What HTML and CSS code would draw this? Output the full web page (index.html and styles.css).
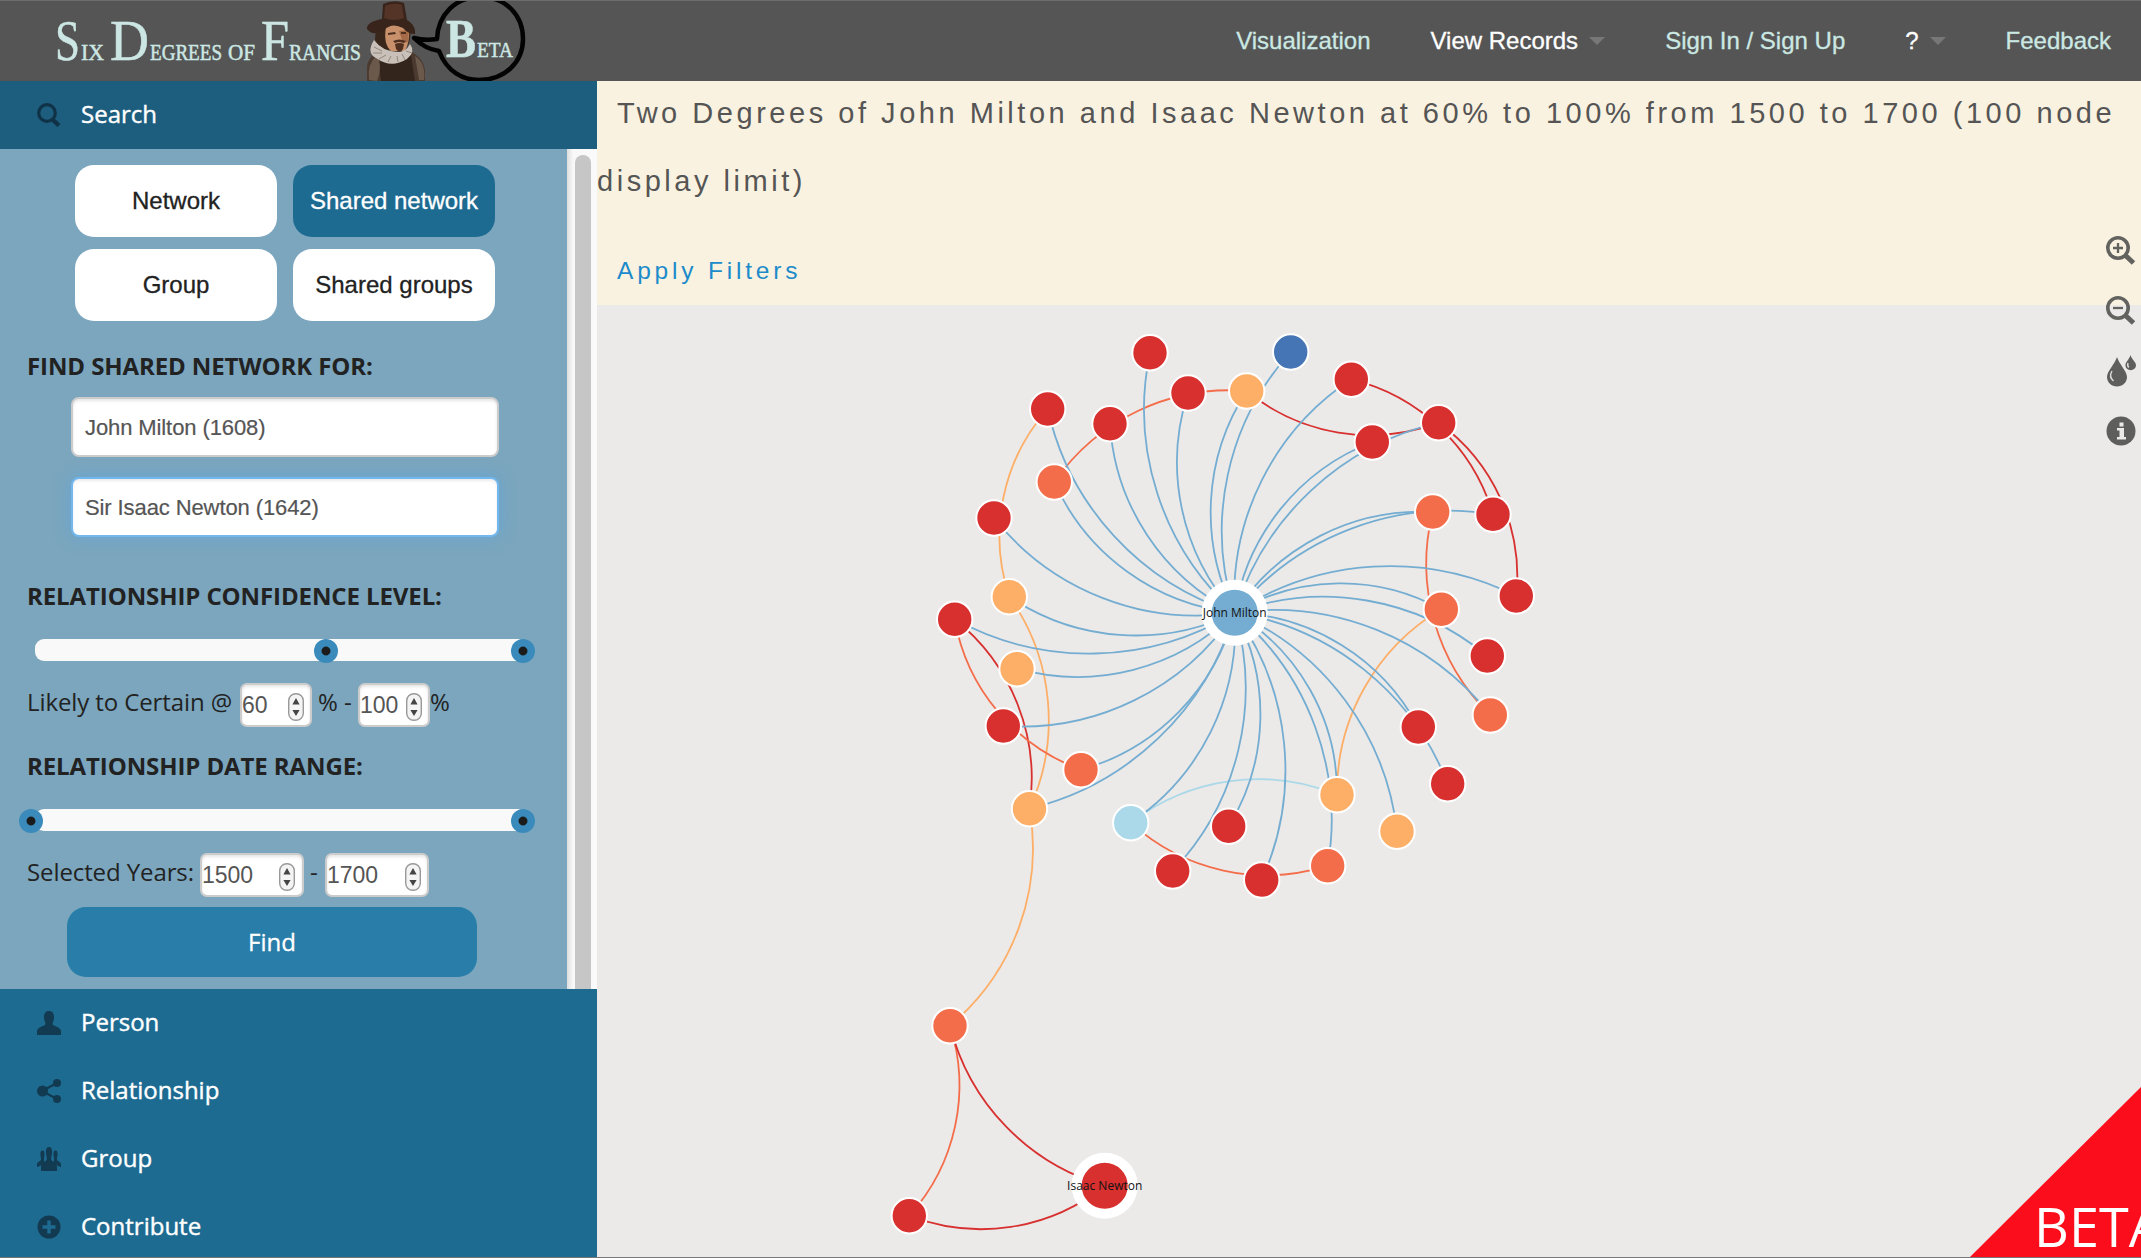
FILE: index.html
```html
<!DOCTYPE html>
<html lang="en">
<head>
<meta charset="utf-8">
<title>Six Degrees of Francis Bacon</title>
<link rel="stylesheet" href="styles.css">
</head>
<body>
<header class="topbar">
  <svg class="logo" width="540" height="80" viewBox="0 1 540 80">
    <g class="logo-text">
      <text x="55" y="60" font-size="57" textLength="25" lengthAdjust="spacingAndGlyphs">S</text>
      <text x="81" y="60" font-size="23" textLength="23" lengthAdjust="spacingAndGlyphs">IX</text>
      <text x="110" y="60" font-size="57" textLength="39" lengthAdjust="spacingAndGlyphs">D</text>
      <text x="150" y="60" font-size="23" textLength="72" lengthAdjust="spacingAndGlyphs">EGREES</text>
      <text x="228" y="60" font-size="23" textLength="27" lengthAdjust="spacingAndGlyphs">OF</text>
      <text x="261" y="60" font-size="57" textLength="28" lengthAdjust="spacingAndGlyphs">F</text>
      <text x="289" y="60" font-size="23" textLength="72" lengthAdjust="spacingAndGlyphs">RANCIS</text>
    </g>
    <g>
      <path fill="#4b3a30" d="M367 81V66Q368 58 378 51L410 51Q423 57 425 70V81Z"/>
      <path fill="#33241c" d="M381 81L378 56L393 64L411 55L415 81Z"/>
      <path fill="#6b5a4c" d="M369 80Q367 64 377 55Q383 66 377 81ZM424 80Q426 63 415 56L419 80Z"/>
      <path fill="#3a271b" d="M377 28Q372 43 380 50L405 50Q412 42 410 26Z"/>
      <path fill="#c8916c" d="M386 27Q383 44 391 51L405 51Q410 42 409 28Q397 22 386 27Z"/>
      <path fill="#a56b49" d="M399 31L402 40L397 41L403 43L408 42L409 30Z"/>
      <path fill="#4e2f20" d="M388 33l7-1 1 2-8 1zM401 32l5 0 0 2-5 0zM393 41q6-3 13 0l-2 2q-5-2-9 0z"/>
      <path fill="#c9c1b9" d="M374 40Q366 53 376 58Q391 69 407 59Q416 52 410 44Q406 52 398 52Q383 52 374 40Z"/>
      <path fill="none" stroke="#91877f" stroke-width="1" d="M374 47l8 4M373 53l9 0M379 59l7-4M388 62l3-6M398 62l-1-6M405 60l-3-6M412 53l-6-2"/>
      <path fill="#4e2f20" d="M395 44q5-2 9 0l-1 5q-3 5-7 0z"/>
      <path fill="#38241b" d="M367 29Q366 22 382 19L383 4Q394 -1 404 3L407 20Q416 25 415 34Q408 34 403 28Q392 22 384 30Q373 37 367 29Z"/>
      <path fill="#543426" d="M385 6Q394 2 402 5L404 18Q394 22 384 18Z"/>
      <path fill="none" stroke="#030303" stroke-width="4.5" stroke-linejoin="round" d="M437 39Q425 41 414 38Q425 49 439 51C447 72 463 80 479 80C505 80 523 62 523 39C523 15 506 -3 480 -3C456 -3 438 14 437 39Z"/>
    </g>
    <g class="logo-text">
      <text x="446" y="57" font-size="54" textLength="30" lengthAdjust="spacingAndGlyphs" font-weight="bold">B</text>
      <text x="477" y="57" font-size="21" textLength="36" lengthAdjust="spacingAndGlyphs">ETA</text>
    </g>
  </svg>
  <nav class="nav">
    <a>Visualization</a>
    <a class="nav-drop">View Records</a>
    <a>Sign In / Sign Up</a>
    <a class="nav-drop">?</a>
    <a>Feedback</a>
  </nav>
</header>
<div class="page">
  <aside class="sidebar">
    <div class="item item-active">
      <svg class="icon" viewBox="0 0 24 24"><circle cx="10" cy="10" r="8.3" fill="none" stroke="#103247" stroke-width="3.2"/><path d="M15.5 16.5L22 22.5" stroke="#103247" stroke-width="4.4"/></svg>
      <span>Search</span>
    </div>
    <div class="scroller">
      <form class="panel">
        <div class="modes">
          <button type="button">Network</button>
          <button type="button" class="on">Shared network</button>
          <button type="button">Group</button>
          <button type="button">Shared groups</button>
        </div>
        <h3 class="h-find">Find shared network for:</h3>
        <div class="field">John Milton (1608)</div>
        <div class="field field-focus">Sir Isaac Newton (1642)</div>
        <h3 class="h-conf">Relationship confidence level:</h3>
        <div class="slider"><i class="knob" style="left:279px"></i><i class="knob" style="left:476px"></i></div>
        <div class="line">
          <span class="w-likely">Likely to Certain @</span>
          <div class="num num-s">60<svg class="spin" viewBox="0 0 16 28"><rect x=".7" y=".7" width="14.6" height="26.6" rx="7"/><path d="M8 5l3.6 6.5H4.4zM8 23l3.6-6H4.4z"/></svg></div>
          <span class="w-pct">% -</span>
          <div class="num num-s">100<svg class="spin" viewBox="0 0 16 28"><rect x=".7" y=".7" width="14.6" height="26.6" rx="7"/><path d="M8 5l3.6 6.5H4.4zM8 23l3.6-6H4.4z"/></svg></div>
          <span>%</span>
        </div>
        <h3 class="h-date">Relationship date range:</h3>
        <div class="slider"><i class="knob" style="left:-16px"></i><i class="knob" style="left:476px"></i></div>
        <div class="line">
          <span class="w-years">Selected Years:</span>
          <div class="num num-l">1500<svg class="spin spin-in" viewBox="0 0 16 28"><rect x=".7" y=".7" width="14.6" height="26.6" rx="7"/><path d="M8 5l3.6 6.5H4.4zM8 23l3.6-6H4.4z"/></svg></div>
          <span class="w-dash">-</span>
          <div class="num num-l">1700<svg class="spin" viewBox="0 0 16 28"><rect x=".7" y=".7" width="14.6" height="26.6" rx="7"/><path d="M8 5l3.6 6.5H4.4zM8 23l3.6-6H4.4z"/></svg></div>
        </div>
        <button type="button" class="find">Find</button>
      </form>
      <div class="track"><div class="thumb"></div></div>
    </div>
    <div class="item">
      <svg class="icon" viewBox="0 0 24 24"><path fill="#123a50" d="M12 0c4 0 5.200 3 5 7-.2 3-1.500 4-1.500 6 0 2 8.500 3 8.500 7v4H0v-4c0-4 8.500-5 8.500-7 0-2-1.300-3-1.500-6-.2-4 1-7 5-7z"/></svg>
      <span>Person</span>
    </div>
    <div class="item">
      <svg class="icon" viewBox="0 0 24 24"><g fill="#123a50"><circle cx="5.500" cy="12" r="5.500"/><circle cx="20" cy="4" r="4"/><circle cx="20" cy="20" r="4"/></g><path d="M20 4L5 12L20 20" fill="none" stroke="#123a50" stroke-width="2.400"/></svg>
      <span>Relationship</span>
    </div>
    <div class="item">
      <svg class="icon" viewBox="0 0 24 24"><g fill="#123a50"><path d="M12 0c2.600 0 3.200 2.500 3 6-.1 2.500-.8 3.500-.8 6 0 3 5.800 3 5.800 8v4H4v-4c0-5 5.800-5 5.800-8 0-2.500-.7-3.500-.8-6-.2-3.500.4-6 3-6z"/><path d="M5.500 3.500c1.800 0 2.200 2 2 4.500 0 2-.6 3-.5 5.500l.5 1.500-4.500 4L0 20v-3c1-3 4-2.500 4-5 0-2-.6-2.500-.6-4.500 0-2.500.3-4 2.100-4z"/><path d="M18.500 3.500c-1.800 0-2.200 2-2 4.500 0 2 .6 3 .5 5.500l-.5 1.500 4.500 4L24 20v-3c-1-3-4-2.500-4-5 0-2 .6-2.500.6-4.500 0-2.500-.3-4-2.100-4z"/></g></svg>
      <span>Group</span>
    </div>
    <div class="item">
      <svg class="icon" viewBox="0 0 24 24"><circle cx="12" cy="12" r="11.500" fill="#123a50"/><path d="M12 5.500v13M5.500 12h13" stroke="#1e6b92" stroke-width="3.400"/></svg>
      <span>Contribute</span>
    </div>
  </aside>
  <main class="stage">
    <section class="banner">
      <h1>Two Degrees of John Milton and Isaac Newton at 60% to 100% from 1500 to 1700 (100 node display limit)</h1>
      <a class="filters">Apply Filters</a>
    </section>
    <svg class="graph" width="1544" height="952" viewBox="597 305 1544 952">
      <g id="links"></g>
      <g id="nodes"></g>
    </svg>
    <div class="tools">
      <svg viewBox="0 0 30 30"><circle cx="12" cy="12" r="10.200"/><path d="M12 7v10M7 12h10" stroke-width="2.300"/><path d="M19.500 19.500L27.500 27" stroke-width="5"/></svg>
      <svg viewBox="0 0 30 30"><circle cx="12" cy="12" r="10.200"/><path d="M7 12h10" stroke-width="2.300"/><path d="M19.500 19.500L27.500 27" stroke-width="5"/></svg>
      <svg viewBox="0 0 30 30"><path class="solid" d="M11 1C13 8 21 15 21 21C21 26.500 16.500 30.500 11 30.500S1 26.500 1 21C1 15 9 8 11 1ZM24.500 -1C25.500 3 30 6 30 9.300A5.300 5 0 0 1 19.400 9.300C19.400 6 23.500 3 24.500 -1Z"/><path class="shine" d="M6 15Q2.500 21 7.500 25M22 7q-1 3 .8 4.500"/></svg>
      <svg viewBox="0 0 30 30"><circle class="solid" cx="15" cy="15" r="14.500"/><path class="glyph" d="M13.500 6.500h4v4h-4zM11 12h7v9h2v2.500h-9V21h2.500v-6.500H11z"/></svg>
    </div>
    <svg class="ribbon" width="171" height="171" viewBox="0 0 171 171">
      <path fill="#fc0d1b" d="M0 171L171 1V171Z"/>
      <text x="64" y="161">BETA</text>
    </svg>
  </main>
</div>
<script src="graph.js"></script>
</body>
</html>
```
FILE: styles.css
```css
* { box-sizing: border-box; }
body {
  margin: 0;
  width: 2141px;
  height: 1258px;
  overflow: hidden;
  font-family: "Open Sans", "Noto Sans", sans-serif;
  color: #222;
  border-bottom: 1px solid #777;
  display: flex;
  flex-direction: column;
}
.topbar {
  flex: none;
  height: 81px;
  background: #555;
  border-top: 1px solid #6d6d6d;
  display: flex;
  justify-content: space-between;
}
.logo { display: block; }
.logo-text { font-family: "Liberation Serif", serif; fill: #cce7e3; stroke: #cce7e3; stroke-width: .5; }
.nav {
  display: flex;
  align-items: center;
  gap: 60px;
  padding-right: 30px;
  font: 24px "Liberation Sans", Arial, sans-serif;
  color: #cbe8e3;
  -webkit-text-stroke: .3px currentColor;
}
.nav-drop { color: #fff; display: flex; align-items: center; gap: 11px; }
.nav-drop::after {
  content: "";
  border: 8px solid transparent;
  border-top-color: #777;
  border-bottom: 0;
}
.page { flex: 1; display: flex; min-height: 0; }
.sidebar { width: 597px; background: #1e6b92; flex: none; }
.item {
  height: 68px;
  padding: 0 0 2px 37px;
  display: flex;
  align-items: center;
  gap: 20px;
  color: #fff;
  font-size: 24px;
  -webkit-text-stroke: .4px currentColor;
}
.item span { margin-top: -2px; }
.item-active { background: #1d5d7e; }
.icon { width: 24px; height: 24px; margin-top: 2px; }
.scroller { height: 840px; display: flex; overflow: hidden; }
.panel { width: 567px; background: #7ba6be; padding-top: 16px; }
.modes {
  display: grid;
  grid-template-columns: 202px 202px;
  grid-auto-rows: 72px;
  gap: 12px 16px;
  margin-left: 75px;
}
button { border: 0; border-radius: 19px; padding: 0; }
.modes button {
  background: #fff;
  color: #222;
  font: 24px "Liberation Sans", Arial, sans-serif;
  -webkit-text-stroke: .3px currentColor;
}
.modes .on { background: #1e6b92; color: #fff; }
h3 {
  margin: 0 0 0 27px;
  font-size: 24px;
  line-height: 34px;
  font-weight: 700;
  text-transform: uppercase;
  letter-spacing: -.1px;
  white-space: nowrap;
}
.h-find { margin-top: 28px; }
.field {
  width: 428px;
  height: 60px;
  margin: 14px 0 20px 71px;
  border: 2px solid #ccc;
  border-radius: 8px;
  background: #fff;
  box-shadow: inset 0 2px 3px rgba(0,0,0,.1);
  padding-left: 12px;
  color: #555;
  font: 22px/57px "Liberation Sans", Arial, sans-serif;
  letter-spacing: -.1px;
  -webkit-text-stroke: .2px currentColor;
}
.field-focus {
  margin-top: 20px;
  border-color: #72b7ee;
  box-shadow: inset 0 2px 3px rgba(0,0,0,.08), 0 0 16px rgba(82,168,236,.5);
}
.h-conf { margin-top: 42px; }
.slider {
  position: relative;
  width: 492px;
  height: 22px;
  margin: 26px 0 0 35px;
  border-radius: 9px;
  background: #f9f9f9;
}
.knob {
  position: absolute;
  top: 0;
  width: 24px;
  height: 24px;
  border-radius: 50%;
  background: radial-gradient(circle, #1b1b1b 3.800px, #3a8bbb 5px);
}
.line {
  display: flex;
  align-items: center;
  height: 44px;
  margin: 22px 0 0 27px;
  font-size: 24px;
  white-space: nowrap;
}
.line span { margin-top: -7px; flex: none; }
.w-likely { width: 213px; letter-spacing: -.1px; }
.w-pct { width: 46px; padding-left: 6px; }
.w-years { width: 173px; letter-spacing: -.1px; }
.w-dash { width: 21px; padding-left: 6px; }
.num {
  height: 44px;
  border: 2px solid #ccc;
  border-radius: 7px;
  background: #fff;
  box-shadow: inset 0 2px 3px rgba(0,0,0,.1);
  display: flex;
  align-items: center;
  justify-content: space-between;
  padding: 0 6px 0 0;
  color: #555;
  font: 23px "Liberation Sans", Arial, sans-serif;
}
.num-s { width: 72px; }
.num-l { width: 104px; }
.spin { width: 16px; height: 28px; margin-top: 3px; }
.spin rect { fill: #f4f4f4; stroke: #999; stroke-width: 1.400; }
.spin path { fill: #444; }
.spin-in { margin-right: 1px; }
.h-date { margin-top: 22px; }
.find {
  display: block;
  width: 410px;
  height: 70px;
  margin: 10px 0 0 67px;
  padding-bottom: 2px;
  background: #287da9;
  color: #fff;
  font: 24px "Open Sans", "Noto Sans", sans-serif;
  -webkit-text-stroke: .3px currentColor;
}
.track {
  width: 30px;
  padding: 6px 6px 0 8px;
  background: linear-gradient(90deg, #dedede, #f8f8f8 20%, #fafafa);
}
.thumb { height: 850px; border-radius: 8px; background: #c6c6c6; }
.stage { position: relative; width: 1544px; background: #ebeae9; overflow: hidden; }
.banner {
  height: 224px;
  background: #faf2e0;
  font-family: "Liberation Sans", Arial, sans-serif;
  display: flow-root;
}
h1 {
  margin: -2px 0 2px;
  font-size: 29px;
  font-weight: 400;
  line-height: 68px;
  letter-spacing: 3.530px;
  text-indent: 20px;
  color: #555;
}
.filters {
  display: block;
  padding-left: 20px;
  line-height: 108px;
  font-size: 24.500px;
  letter-spacing: 3.800px;
  color: #1c8bcb;
}
.graph { display: block; }
.graph path { fill: none; stroke-width: 1.800; }
.graph circle { stroke: #fff; }
.graph text { font-size: 12px; text-anchor: middle; fill: #111; }
.tools {
  position: absolute;
  right: 5px;
  top: 155px;
  display: grid;
  gap: 30px;
}
.tools svg { width: 30px; height: 30px; fill: none; stroke: #62625f; stroke-width: 3.600; overflow: visible; }
.tools .solid { fill: #5e5e5c; stroke: none; }
.tools .shine { stroke: #ddd; stroke-width: 1.400; }
.tools .glyph { fill: #ebeae9; stroke: none; }
.ribbon { position: absolute; right: 0; bottom: 0; }
.ribbon text { fill: #fff; font-size: 54px; }
```
FILE: graph.js
```js
const RED = "#d7302f", ORANGE = "#f46d4a", AMBER = "#fdae67", BLUE = "#74add1", SKY = "#abd9e9", NAVY = "#4575b4";

const nodes = {
  milton: [1234.7, 612.7, BLUE, "John Milton"],
  newton: [1104.7, 1185.7, RED, "Isaac Newton"],
  n1: [1150, 352.7, RED], n2: [1188, 393, RED], n3: [1246.7, 391, AMBER],
  n4: [1110, 423.7, RED], n5: [1047.7, 409, RED], n6: [1054.3, 482, ORANGE],
  n7: [994, 518, RED], n8: [1009.3, 596.7, AMBER], n9: [954.7, 619.3, RED],
  n10: [1017, 668.7, AMBER], n11: [1003.3, 726, RED], n12: [1081, 769.7, ORANGE],
  n13: [1029.5, 808.7, AMBER], n14: [1130.7, 822.7, SKY], n15: [1172.7, 871, RED],
  n16: [1228.7, 826.3, RED], n17: [1261.7, 880, RED], n18: [1327.7, 865.7, ORANGE],
  n19: [1337, 794.7, AMBER], n20: [1397, 831.3, AMBER], n21: [1418.3, 727, RED],
  n22: [1447.7, 783.7, RED], n23: [1490.3, 715, ORANGE], n24: [1487.3, 656, RED],
  n25: [1441.3, 609.3, ORANGE], n26: [1516.3, 596, RED], n27: [1432.7, 512, ORANGE],
  n28: [1493, 514.3, RED], n29: [1372.3, 442, RED], n30: [1438.7, 422.7, RED],
  n31: [1351.3, 379.3, RED], n32: [1290.7, 352, NAVY],
  n33: [950, 1025.7, ORANGE], n34: [909.3, 1215.7, RED]
};

const links = [
  ["n8", "n5", AMBER], ["n8", "n13", AMBER], ["n13", "n33", AMBER], ["n19", "n25", AMBER],
  ["n14", "n19", SKY], ["n18", "n14", ORANGE], ["n6", "n3", ORANGE], ["n9", "n13", RED],
  ["n12", "n9", ORANGE], ["n30", "n3", RED], ["n31", "n28", RED], ["n30", "n26", RED],
  ["n23", "n27", ORANGE], ["n33", "n34", ORANGE], ["newton", "n33", RED], ["newton", "n34", RED]
];
for (let i = 1; i <= 32; i++) links.push(["milton", "n" + i, BLUE]);

function add(parent, tag, attrs) {
  const el = document.createElementNS("http://www.w3.org/2000/svg", tag);
  for (const k in attrs) el.setAttribute(k, attrs[k]);
  return parent.appendChild(el);
}

const linkLayer = document.getElementById("links");
const nodeLayer = document.getElementById("nodes");

// Each link is an arc whose radius equals the distance between its ends.
for (const [a, b, color] of links) {
  const [x1, y1] = nodes[a], [x2, y2] = nodes[b];
  const r = Math.hypot(x2 - x1, y2 - y1);
  add(linkLayer, "path", { d: `M${x1} ${y1}A${r} ${r} 0 0 1 ${x2} ${y2}`, stroke: color });
}

for (const [x, y, color, label] of Object.values(nodes)) {
  add(nodeLayer, "circle", { cx: x, cy: y, r: label ? 28 : 17.7, fill: color, "stroke-width": label ? 10 : 2 });
  if (label) add(nodeLayer, "text", { x, y: y + 4.5 }).textContent = label;
}
```
